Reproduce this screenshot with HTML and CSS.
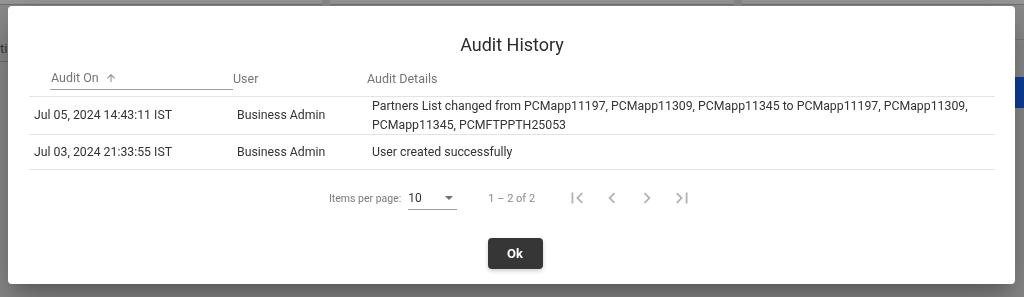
FILE: index.html
```html
<!DOCTYPE html>
<html lang="en">
<head>
    <meta charset="UTF-8">
    <meta name="viewport" content="width=device-width, initial-scale=1.0">
    <title>Audit History</title>
    <link rel="stylesheet" href="styles.css">
</head>
<body>
    <!-- Page behind the dialog (dimmed) -->
    <div class="page">
        <div class="page-topbar">
            <div class="seg seg-a"></div>
            <div class="seg seg-b"></div>
            <div class="seg seg-c"></div>
        </div>
        <div class="page-toolbar">
            <div class="page-left">ti(</div>
            <div class="page-right">
                <div class="page-action"></div>
            </div>
        </div>
    </div>

    <!-- Dialog -->
    <div class="dialog">
        <h2 class="dialog-title">Audit History</h2>

        <div class="audit-table">
            <div class="audit-head">
                <div class="head-cell head-sort">
                    <span class="sort-label">Audit On
                        <svg class="sort-arrow" viewBox="0 0 24 24"><path d="M4 12l1.41 1.41L11 7.83V20h2V7.83l5.58 5.59L20 12l-8-8-8 8z"/></svg>
                    </span>
                </div>
                <div class="head-cell head-user">User</div>
                <div class="head-cell head-details">Audit Details</div>
            </div>

            <div class="audit-row">
                <div class="cell cell-date">Jul 05, 2024 14:43:11 IST</div>
                <div class="cell cell-user">Business Admin</div>
                <div class="cell cell-details">Partners List changed from PCMapp11197, PCMapp11309, PCMapp11345 to PCMapp11197, PCMapp11309, PCMapp11345, PCMFTPPTH25053</div>
            </div>
            <div class="audit-row">
                <div class="cell cell-date">Jul 03, 2024 21:33:55 IST</div>
                <div class="cell cell-user">Business Admin</div>
                <div class="cell cell-details">User created successfully</div>
            </div>
        </div>

        <!-- Paginator -->
        <div class="paginator">
            <span class="pg-label">Items per page:</span>
            <div class="pg-select">
                <span>10</span>
                <span class="pg-caret"></span>
            </div>
            <span class="pg-range">1 – 2 of 2</span>
            <div class="pg-buttons">
                <button class="pg-btn" aria-label="First page"><svg viewBox="0 0 24 24"><path d="M18.41 16.59L13.82 12l4.59-4.59L17 6l-6 6 6 6zM6 6h2v12H6z"/></svg></button>
                <button class="pg-btn" aria-label="Previous page"><svg viewBox="0 0 24 24"><path d="M15.41 7.41L14 6l-6 6 6 6 1.41-1.41L10.83 12z"/></svg></button>
                <button class="pg-btn" aria-label="Next page"><svg viewBox="0 0 24 24"><path d="M10 6L8.59 7.41 13.17 12l-4.58 4.59L10 18l6-6z"/></svg></button>
                <button class="pg-btn" aria-label="Last page"><svg viewBox="0 0 24 24"><path d="M5.59 7.41L10.18 12l-4.59 4.59L7 18l6-6-6-6zM16 6h2v12h-2z"/></svg></button>
            </div>
        </div>

        <div class="dialog-actions">
            <button class="ok-button">Ok</button>
        </div>
    </div>
</body>
</html>
```

FILE: styles.css
```css
/* Base */
* {
    box-sizing: border-box;
}

body {
    margin: 0;
    height: 297px;
    overflow: hidden;
    background: #8b8b8b;
    font-family: Roboto, "Noto Sans", sans-serif;
}

/* Dimmed page behind the dialog */
.page-topbar {
    display: flex;
    gap: 8px;
    height: 5px;
}

.seg {
    background: #989898;
    border-bottom: 1px solid #727272;
}

.seg-a { width: 322px; }
.seg-b { width: 404px; }
.seg-c { flex: 1; }

.page-toolbar {
    display: flex;
    justify-content: space-between;
    margin-top: 34px;
}

.page-left {
    font-size: 13px;
    color: #3a3a3a;
    height: 23px;
    padding-top: 2px;
    border-bottom: 1px solid #6e6e6e;
    width: 20px;
}

.page-right {
    width: 20px;
    padding-top: 20px;
    border-top: 1px solid #7a7a7a;
}

.page-action {
    height: 31px;
    margin-top: 17px;
    background: #0d3f9c;
}

/* Dialog */
.dialog {
    position: fixed;
    top: 6px;
    left: 8px;
    width: 1007px;
    height: 278px;
    background: #fff;
    border-radius: 4px;
    padding: 24px 20px 0 21px;
    display: flex;
    flex-direction: column;
    box-shadow: 0 11px 15px -7px rgba(0, 0, 0, 0.2),
                0 24px 38px 3px rgba(0, 0, 0, 0.14),
                0 9px 46px 8px rgba(0, 0, 0, 0.12);
}

.dialog-title {
    margin: 0;
    font-size: 18px;
    font-weight: 400;
    line-height: 30px;
    color: #2b2b2b;
    text-align: center;
}

/* Table */
.audit-head,
.audit-row {
    display: grid;
    grid-template-columns: 204px 134px 1fr;
    border-bottom: 1px solid #e3e3e3;
}

.audit-head {
    height: 37px;
    align-items: center;
    font-size: 12.5px;
    color: #757575;
}

.sort-label {
    display: flex;
    align-items: center;
    gap: 6px;
    margin-left: 21px;
    padding: 4px 0 3px 1px;
    line-height: 16px;
    border-bottom: 1px solid #9e9e9e;
}

.sort-arrow {
    width: 12px;
    height: 12px;
    fill: #8a8a8a;
}

.audit-row {
    min-height: 35px;
    align-items: center;
    font-size: 12.3px;
    line-height: 18.5px;
    color: #333;
}

.cell-date {
    padding-left: 5px;
}

.cell-user {
    padding-left: 4px;
}

.cell-details {
    padding: 0 20px 0 5px;
}

/* Paginator */
.paginator {
    height: 56px;
    display: flex;
    align-items: center;
    justify-content: center;
    font-size: 10.5px;
    color: #7a7a7a;
    padding-left: 4px;
}

.pg-select {
    display: flex;
    align-items: center;
    justify-content: space-between;
    width: 49px;
    margin-left: 7px;
    padding: 4px 4px 3px 0;
    line-height: 16px;
    font-size: 12px;
    color: #333;
    border-bottom: 1px solid #9e9e9e;
}

.pg-caret {
    width: 0;
    height: 0;
    border-left: 4.5px solid transparent;
    border-right: 4.5px solid transparent;
    border-top: 4.5px solid #6f6f6f;
}

.pg-range {
    margin-left: 31px;
    font-size: 11px;
    color: #8a8a8a;
}

.pg-buttons {
    display: flex;
    margin-left: 24px;
}

.pg-btn {
    width: 35px;
    height: 35px;
    padding: 0;
    border: none;
    background: none;
    display: flex;
    align-items: center;
    justify-content: center;
}

.pg-btn svg {
    width: 22px;
    height: 22px;
    fill: #b3b3b3;
}

/* Actions */
.dialog-actions {
    display: flex;
    justify-content: center;
    margin-top: 12px;
    padding-left: 6px;
}

.ok-button {
    width: 55px;
    height: 31px;
    border: none;
    border-radius: 4px;
    background: #363636;
    color: #fff;
    font-family: Roboto, sans-serif;
    font-size: 13px;
    font-weight: 700;
    box-shadow: 0 2px 4px rgba(0, 0, 0, 0.2);
}
```
